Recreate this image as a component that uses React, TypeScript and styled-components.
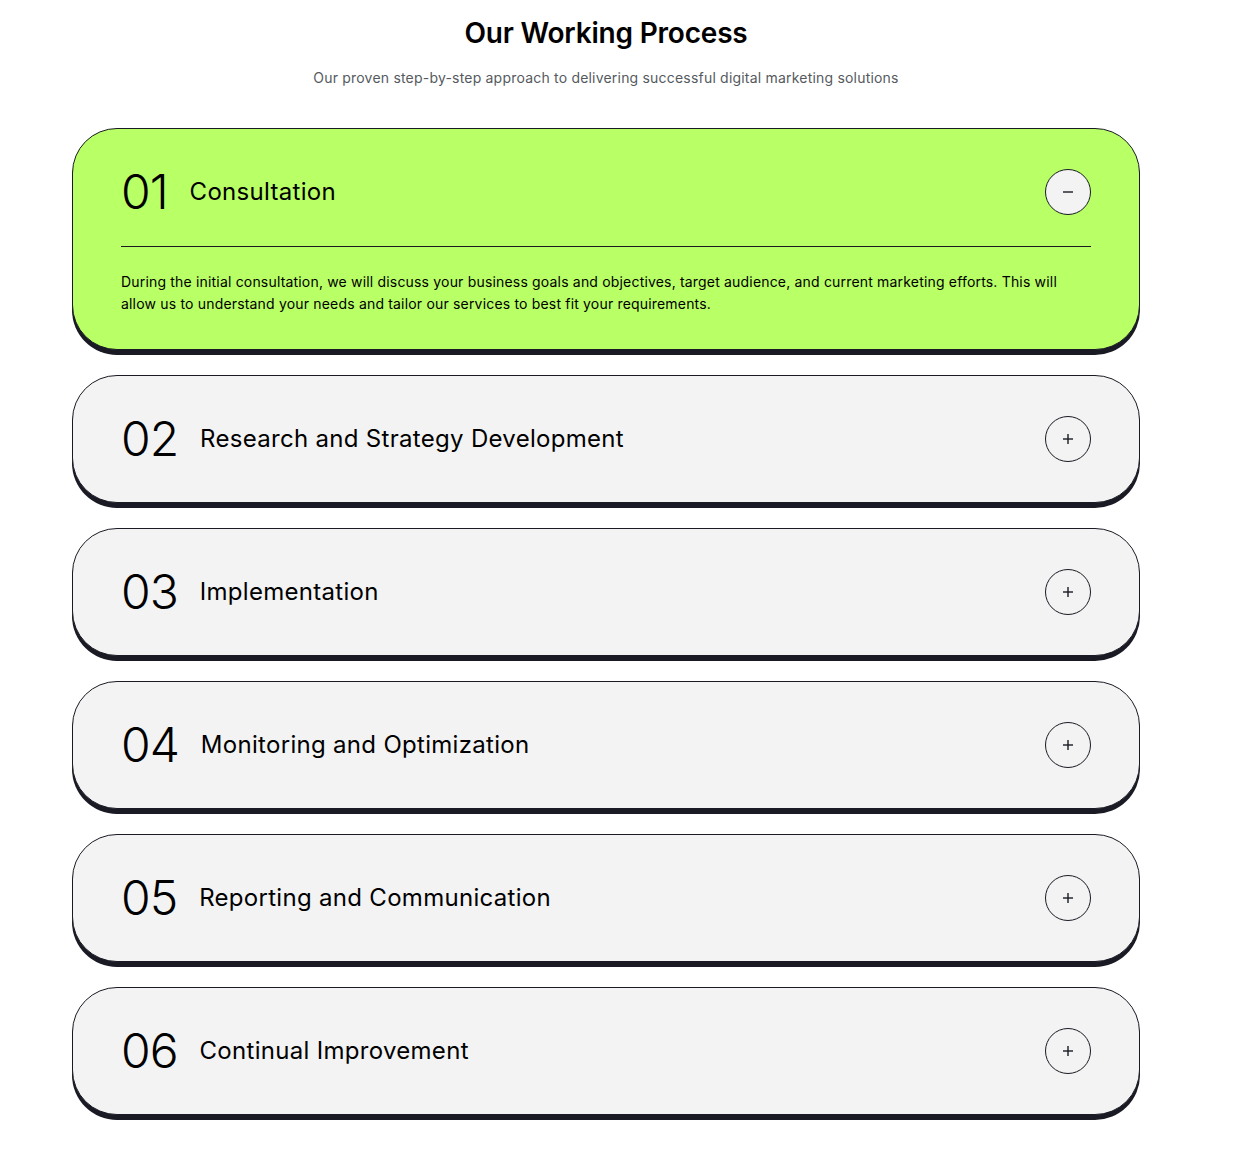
import { useState } from 'react';
import styled, { createGlobalStyle } from 'styled-components';

const GlobalStyle = createGlobalStyle`
  * {
    box-sizing: border-box;
  }
  body {
    margin: 0;
    background: #ffffff;
    font-family: Inter, 'Liberation Sans', sans-serif;
    color: #191a23;
  }
`;

const steps = [
  {
    num: '01',
    title: 'Consultation',
    text: 'During the initial consultation, we will discuss your business goals and objectives, target audience, and current marketing efforts. This will allow us to understand your needs and tailor our services to best fit your requirements.',
  },
  { num: '02', title: 'Research and Strategy Development', text: '' },
  { num: '03', title: 'Implementation', text: '' },
  { num: '04', title: 'Monitoring and Optimization', text: '' },
  { num: '05', title: 'Reporting and Communication', text: '' },
  { num: '06', title: 'Continual Improvement', text: '' },
];

const App = () => {
  const [open, setOpen] = useState(0);

  return (
    <>
      <GlobalStyle />
      <Section>
        <Heading>Our Working Process</Heading>
        <Subheading>
          Our proven step-by-step approach to delivering successful digital marketing solutions
        </Subheading>
        <List>
          {steps.map((step, i) => {
            const active = open === i;
            return (
              <Card key={step.num} $active={active}>
                <CardHead>
                  <Num>{step.num}</Num>
                  <Title>{step.title}</Title>
                  <Toggle
                    aria-label={active ? 'Collapse' : 'Expand'}
                    onClick={() => setOpen(active ? -1 : i)}
                  >
                    <svg width="12" height="12" viewBox="0 0 12 12">
                      <path d="M1 6h10" stroke="#191a23" strokeWidth="1.4" />
                      {!active && <path d="M6 1v10" stroke="#191a23" strokeWidth="1.4" />}
                    </svg>
                  </Toggle>
                </CardHead>
                {active && (
                  <Body>
                    <Divider />
                    <Text>{step.text}</Text>
                  </Body>
                )}
              </Card>
            );
          })}
        </List>
      </Section>
    </>
  );
};

const Section = styled.section`
  width: 1068px;
  margin-left: 72px;
  padding-top: 16px;
  padding-bottom: 40px;
`;

const Heading = styled.h2`
  margin: 0;
  text-align: center;
  font-size: 28px;
  line-height: 34px;
  font-weight: 600;
  letter-spacing: -0.2px;
  color: #000;
`;

const Subheading = styled.p`
  margin: 18px 0 0;
  text-align: center;
  font-size: 14px;
  line-height: 20px;
  letter-spacing: 0.2px;
  color: #555a60;
`;

const List = styled.div`
  margin-top: 40px;
  display: flex;
  flex-direction: column;
  gap: 25px;
`;

const Card = styled.div<{ $active: boolean }>`
  border: 1px solid #191a23;
  border-radius: 45px;
  box-shadow: 0 5px 0 #191a23;
  background: ${({ $active }) => ($active ? '#b9ff66' : '#f3f3f3')};
  padding: 40px 48px ${({ $active }) => ($active ? '34px' : '40px')};
`;

const CardHead = styled.div`
  display: flex;
  align-items: center;
  height: 46px;
`;

const Num = styled.span`
  font-size: 48px;
  font-weight: 300;
  line-height: 1;
  letter-spacing: -1px;
  color: #000;
`;

const Title = styled.h3`
  flex: 1;
  margin: 0 0 0 22px;
  font-size: 24px;
  font-weight: 400;
  line-height: 1;
  letter-spacing: 0.3px;
  color: #000;
`;

const Toggle = styled.button`
  width: 46px;
  height: 46px;
  border-radius: 50%;
  border: 1px solid #191a23;
  background: #f3f3f3;
  display: flex;
  align-items: center;
  justify-content: center;
  padding: 0;
  cursor: pointer;
`;

const Body = styled.div`
  display: flex;
  flex-direction: column;
`;

const Divider = styled.hr`
  margin: 31px 0 0;
  border: none;
  border-top: 1px solid #191a23;
`;

const Text = styled.p`
  margin: 24px 0 0;
  font-size: 14px;
  line-height: 22px;
  letter-spacing: 0.18px;
  color: #000;
`;

export default App;
